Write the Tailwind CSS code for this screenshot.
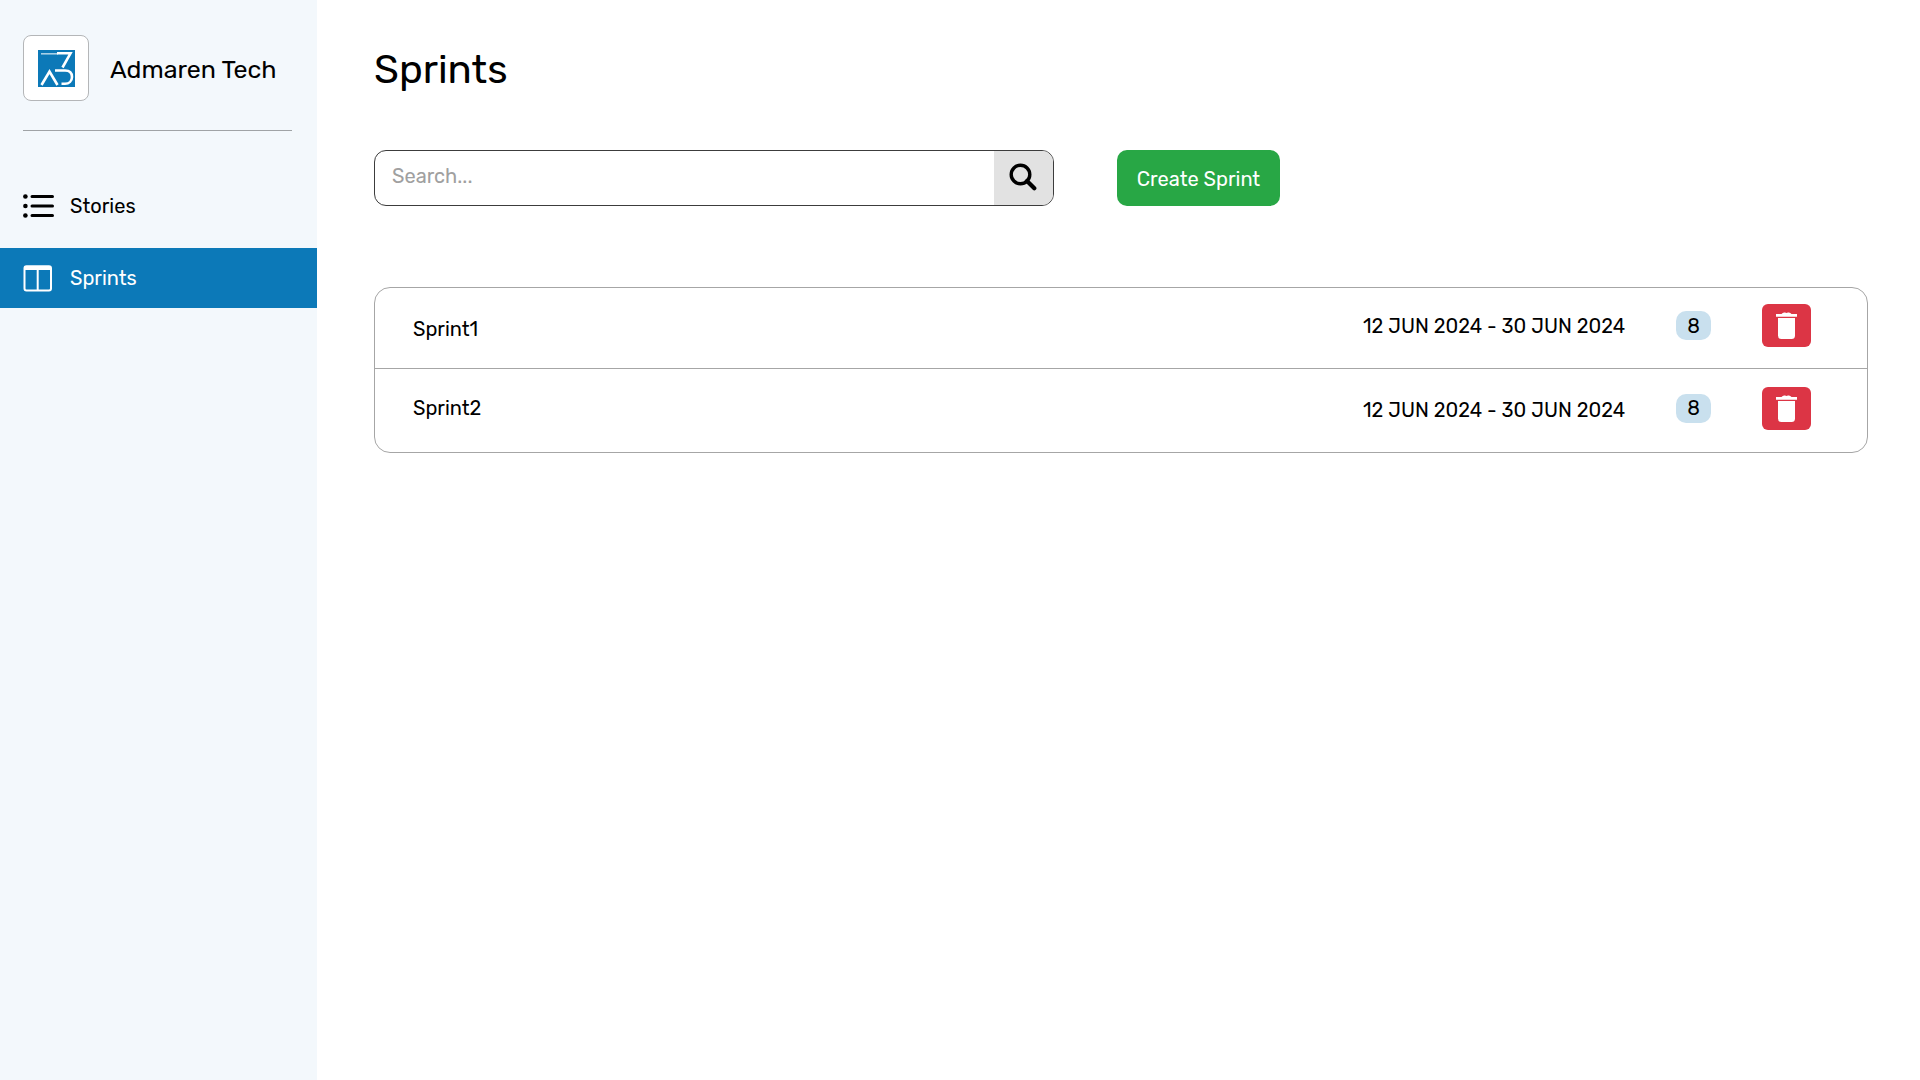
<!DOCTYPE html>
<html lang="en">
<head>
<meta charset="utf-8">
<meta name="viewport" content="width=device-width, initial-scale=1">
<title>Sprints</title>
<script src="https://cdn.jsdelivr.net/npm/@tailwindcss/browser@4"></script>
</head>
<body class="flex min-h-screen bg-white font-[Rubik,Roboto,sans-serif] text-xl text-black">
  <aside class="w-[317px] shrink-0 bg-[#f3f8fc]">
    <div class="mr-[25px] ml-[23px] flex h-[131px] items-center border-b border-[#9fa3a6] pt-1.5">
      <div class="flex size-[66px] shrink-0 items-center justify-center rounded-lg border border-[#b4b6b8] bg-white">
        <svg class="size-[37px]" viewBox="0 0 37 37" fill="none" aria-hidden="true">
          <rect width="37" height="37" fill="#0c79b8"/>
          <path d="M3 3.8H20" stroke="#a9d0e6" stroke-width="1.6"/>
          <path d="M19 3.3H32.5L24.5 17.5" stroke="#fff" stroke-width="2.6"/>
          <path d="M3.5 35L11.5 21.5L19.5 35" stroke="#fff" stroke-width="2.6"/>
          <path d="M17 20.5H27C32 20.5 34 23.5 34 27C34 31 31 33.8 27 33.8H23.5" stroke="#fff" stroke-width="2.6"/>
        </svg>
      </div>
      <span class="ml-[21px] pt-0.5 text-[25px] whitespace-nowrap">Admaren Tech</span>
    </div>
    <nav class="mt-[45px]">
      <a href="#stories" class="flex h-[60px] items-center pl-[23px]">
        <svg class="mr-4 h-6 w-[31px]" viewBox="0 0 31 24" fill="none" stroke="#000" stroke-linecap="round" aria-hidden="true">
          <g fill="#000" stroke="none"><circle cx="2.4" cy="2.5" r="2.3"/><circle cx="2.4" cy="12" r="2.3"/><circle cx="2.4" cy="21.5" r="2.3"/></g>
          <path d="M9 2.5H29.5M9 12H29.5M9 21.5H29.5" stroke-width="3"/>
        </svg>
        Stories
      </a>
      <a href="#sprints" aria-current="page" class="mt-3 flex h-[60px] items-center bg-[#0c79b8] pl-[23px] text-white">
        <svg class="mr-[18px] h-[27px] w-[29px]" viewBox="0 0 29 27" fill="none" stroke="#fff" aria-hidden="true">
          <rect x="1.5" y="1.2" width="26.5" height="24.4" rx="2" stroke-width="2"/>
          <path d="M1.500 3H28" stroke-width="4"/>
          <path d="M14.7 3V25" stroke-width="2"/>
        </svg>
        Sprints
      </a>
    </nav>
  </aside>

  <main class="min-w-0 flex-1 pt-10 pr-[52px] pl-[57px]">
    <h1 class="text-[40px] leading-[60px]">Sprints</h1>
    <div class="mt-[50px] flex h-14 gap-[63px]">
      <form role="search" class="flex w-[680px] overflow-hidden rounded-xl border border-[#3c3c3c]">
        <input type="search" aria-label="Search sprints" placeholder="Search..." class="min-w-0 flex-1 pb-1 pl-[17px] outline-none placeholder:text-[#a0a0a0]">
        <button type="submit" aria-label="Search" class="flex w-[59px] items-center justify-center bg-[#e2e2e2] pr-0.5 pb-0.5">
          <svg class="size-7" viewBox="0 0 28 28" fill="none" stroke="#000" aria-hidden="true">
            <circle cx="11.5" cy="11.5" r="9.3" stroke-width="3.4"/>
            <path d="M18 18L25.3 25.3" stroke-width="4.2" stroke-linecap="round"/>
          </svg>
        </button>
      </form>
      <button type="button" class="w-[163px] rounded-[10px] bg-[#28a745] pt-0.5 whitespace-nowrap text-white">Create Sprint</button>
    </div>

    <div class="mt-[81px] overflow-hidden rounded-2xl border border-[#a6a6a6]">
      <table class="w-full table-fixed border-collapse">
        <colgroup><col><col class="w-[313px]"><col class="w-[86px]"><col class="w-[105px]"></colgroup>
        <tbody>
          <tr class="h-20 border-b border-[#a6a6a6]">
            <td class="pt-0.5 pl-[38px]">Sprint1</td>
            <td class="pb-1 whitespace-nowrap">12 JUN 2024 - 30 JUN 2024</td>
            <td class="pb-1"><span class="flex h-[29px] w-[35px] items-center justify-center rounded-[10px] bg-[#c9e0ee]">8</span></td>
            <td class="pb-1">
              <button type="button" aria-label="Delete Sprint1" class="flex h-[43px] w-[49px] items-center justify-center rounded-md bg-[#dc3545]">
                <svg class="h-[27px] w-[21px]" viewBox="0 0 21 27" fill="#fff" aria-hidden="true"><path d="M0 2H5.500Q7 0 9 .6L10.500 1L12 .6Q14 0 15.500 2H21V4.800H0ZM2 6H19V23.500Q19 27 15.500 27H5.500Q2 27 2 23.500Z"/></svg>
              </button>
            </td>
          </tr>
          <tr class="h-[84px]">
            <td class="pb-1 pl-[38px]">Sprint2</td>
            <td class="whitespace-nowrap">12 JUN 2024 - 30 JUN 2024</td>
            <td class="pb-1"><span class="flex h-[29px] w-[35px] items-center justify-center rounded-[10px] bg-[#c9e0ee]">8</span></td>
            <td class="pb-1">
              <button type="button" aria-label="Delete Sprint2" class="flex h-[43px] w-[49px] items-center justify-center rounded-md bg-[#dc3545]">
                <svg class="h-[27px] w-[21px]" viewBox="0 0 21 27" fill="#fff" aria-hidden="true"><path d="M0 2H5.500Q7 0 9 .6L10.500 1L12 .6Q14 0 15.500 2H21V4.800H0ZM2 6H19V23.500Q19 27 15.500 27H5.500Q2 27 2 23.500Z"/></svg>
              </button>
            </td>
          </tr>
        </tbody>
      </table>
    </div>
  </main>
</body>
</html>
